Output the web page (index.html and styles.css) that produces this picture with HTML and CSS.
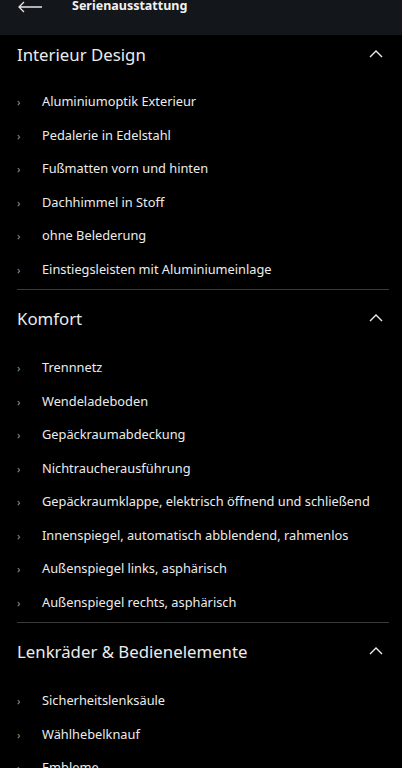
FILE: index.html
```html
<!DOCTYPE html>
<html lang="de">
<head>
    <meta charset="UTF-8">
    <meta name="viewport" content="width=device-width, initial-scale=1.0">
    <title>Serienausstattung</title>
    <link rel="stylesheet" href="styles.css">
</head>
<body>
    <div class="header">
        <svg class="back" width="26" height="12" viewBox="0 0 26 12">
            <path d="M25 6H2M7 1L2 6l5 5" fill="none" stroke="#e6e6e6" stroke-width="1.3"/>
        </svg>
        <div class="title">Serienausstattung</div>
    </div>
    <div class="content">
        <div class="section">
            <div class="section-head">
                <span>Interieur Design</span>
                <svg class="toggle" width="14" height="8" viewBox="0 0 14 8"><path d="M1 7l6-6 6 6" fill="none" stroke="#eee" stroke-width="1.4"/></svg>
            </div>
            <ul class="items">
                <li>Aluminiumoptik Exterieur</li>
                <li>Pedalerie in Edelstahl</li>
                <li>Fußmatten vorn und hinten</li>
                <li>Dachhimmel in Stoff</li>
                <li>ohne Belederung</li>
                <li>Einstiegsleisten mit Aluminiumeinlage</li>
            </ul>
        </div>
        <div class="section">
            <div class="section-head">
                <span>Komfort</span>
                <svg class="toggle" width="14" height="8" viewBox="0 0 14 8"><path d="M1 7l6-6 6 6" fill="none" stroke="#eee" stroke-width="1.4"/></svg>
            </div>
            <ul class="items">
                <li>Trennnetz</li>
                <li>Wendeladeboden</li>
                <li>Gepäckraumabdeckung</li>
                <li>Nichtraucherausführung</li>
                <li>Gepäckraumklappe, elektrisch öffnend und schließend</li>
                <li>Innenspiegel, automatisch abblendend, rahmenlos</li>
                <li>Außenspiegel links, asphärisch</li>
                <li>Außenspiegel rechts, asphärisch</li>
            </ul>
        </div>
        <div class="section">
            <div class="section-head">
                <span>Lenkräder &amp; Bedienelemente</span>
                <svg class="toggle" width="14" height="8" viewBox="0 0 14 8"><path d="M1 7l6-6 6 6" fill="none" stroke="#eee" stroke-width="1.4"/></svg>
            </div>
            <ul class="items">
                <li>Sicherheitslenksäule</li>
                <li>Wählhebelknauf</li>
                <li>Embleme</li>
            </ul>
        </div>
    </div>
</body>
</html>
```
FILE: styles.css
```css
body {
    margin: 0;
    background-color: #000;
    color: #ececec;
    font-family: "Noto Sans", sans-serif;
    overflow: hidden;
}

.header {
    height: 35px;
    background-color: #13161b;
    display: flex;
    align-items: flex-start;
}

.back {
    margin: 1px 0 0 17px;
}

.title {
    margin-left: 29px;
    margin-top: -3px;
    font-size: 12.5px;
    font-weight: bold;
    color: #f2f2f2;
}

.content {
    padding: 0 13px 0 17px;
}

.section {
    padding-top: 15px;
    border-bottom: 1px solid #3a3a3a;
}

.section:first-child {
    padding-top: 6px;
}

.section-head {
    height: 30px;
    padding-bottom: 4px;
    box-sizing: border-box;
    display: flex;
    align-items: center;
    justify-content: space-between;
    font-size: 16.8px;
}

.toggle {
    margin-right: 6px;
}

.items {
    list-style: none;
    margin: 0;
    padding: 16px 0 3px 0;
}

.section:first-child .items {
    padding-top: 14px;
}

.items li {
    height: 33.5px;
    line-height: 33.5px;
    font-size: 12.8px;
    padding-left: 25px;
    position: relative;
}

.items li::before {
    content: "›";
    position: absolute;
    left: 0;
    top: 0;
    color: #9a9a9a;
    font-size: 11px;
}
```
